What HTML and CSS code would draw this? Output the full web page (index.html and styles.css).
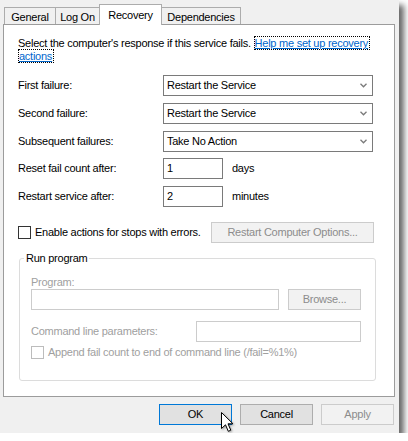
FILE: index.html
```html
<!DOCTYPE html>
<html>
<head>
<meta charset="utf-8">
<link rel="stylesheet" href="styles.css">
</head>
<body>
<div class="dialog">
  <div class="tabs">
    <div class="tab t-general">General</div>
    <div class="tab t-logon">Log On</div>
    <div class="tab active t-recovery">Recovery</div>
    <div class="tab t-deps">Dependencies</div>
  </div>
  <div class="panel">
    <p class="intro">Select the computer's response if this service fails. <a class="link">Help me set up recovery<br>actions</a></p>
    <div class="form">
      <span class="lbl">First failure:</span>
      <div class="combo"><span>Restart the Service</span><svg class="chev" width="7" height="5" viewBox="0 0 7 5"><polyline points="0.5,0.8 3.5,3.8 6.5,0.8" fill="none" stroke="#7a7a7a" stroke-width="1.3"/></svg></div>
      <span class="lbl">Second failure:</span>
      <div class="combo"><span>Restart the Service</span><svg class="chev" width="7" height="5" viewBox="0 0 7 5"><polyline points="0.5,0.8 3.5,3.8 6.5,0.8" fill="none" stroke="#7a7a7a" stroke-width="1.3"/></svg></div>
      <span class="lbl">Subsequent failures:</span>
      <div class="combo"><span>Take No Action</span><svg class="chev" width="7" height="5" viewBox="0 0 7 5"><polyline points="0.5,0.8 3.5,3.8 6.5,0.8" fill="none" stroke="#7a7a7a" stroke-width="1.3"/></svg></div>
      <span class="lbl">Reset fail count after:</span>
      <div class="inrow"><div class="input num">1</div><span class="unit">days</span></div>
      <span class="lbl">Restart service after:</span>
      <div class="inrow"><div class="input num">2</div><span class="unit">minutes</span></div>
    </div>
    <div class="errrow">
      <span class="check"></span>
      <span class="checktext">Enable actions for stops with errors.</span>
      <div class="btn disabled wide">Restart Computer Options...</div>
    </div>
    <fieldset class="group">
      <legend>Run program</legend>
      <div class="dlbl">Program:</div>
      <div class="progrow">
        <div class="input dis prog"></div>
        <div class="btn disabled browse">Browse...</div>
      </div>
      <div class="cmdrow">
        <span class="dlbl cmdlbl">Command line parameters:</span>
        <div class="input dis cmd"></div>
      </div>
      <div class="approw">
        <span class="check dischk"></span>
        <span class="dlbl">Append fail count to end of command line (/fail=%1%)</span>
      </div>
    </fieldset>
  </div>
  <div class="buttons">
    <div class="btn default">OK</div>
    <div class="btn">Cancel</div>
    <div class="btn disabled">Apply</div>
  </div>
  <svg class="cursor" width="14" height="22" viewBox="0 0 14 22"><path d="M0.5,0.5 L0.5,16.5 L4.5,12.8 L7.3,19.3 L9.8,18.2 L7,11.8 L12,11.8 Z" fill="#fff" stroke="#000" stroke-width="1" stroke-linejoin="miter"/></svg>
</div>
</body>
</html>
```
FILE: styles.css
```css
* { box-sizing: border-box; }
body {
  margin: 0;
  background: #fff;
  font-family: "Liberation Sans", Arial, sans-serif;
  font-size: 11px;
  line-height: 13px;
  letter-spacing: -0.25px;
  color: #000;
}
.dialog {
  position: relative;
  width: 399px;
  height: 433px;
  background: #f0f0f0;
  box-shadow: 5px 5px 6px rgba(0, 0, 0, 0.6);
  display: flex;
  flex-direction: column;
  padding: 4px 0 0 3px;
}
.tabs {
  display: flex;
  align-items: flex-end;
  height: 20px;
  padding-left: 1px;
  position: relative;
  z-index: 2;
}
.tab {
  height: 17px;
  border: 1px solid #acacac;
  border-bottom: none;
  background: #f0f0f0;
  margin-left: -1px;
  text-align: center;
  line-height: 16px;
  padding-top: 1px;
}
.t-general { margin-left: 0; width: 52px; }
.t-logon { width: 45px; }
.t-recovery { width: 63px; }
.t-deps { width: 80px; }
.tab.active {
  height: 21px;
  margin-bottom: -1px;
  background: #fff;
  position: relative;
  z-index: 3;
  padding-top: 2px;
}
.panel {
  width: 392px;
  height: 373px;
  flex: none;
  background: #fff;
  border: 1px solid #9c9c9c;
  padding: 12px 0 0 14px;
  position: relative;
  z-index: 1;
}
.intro {
  margin: 0;
  white-space: nowrap;
  line-height: 13px;
}
.link {
  color: #0066cc;
  text-decoration: underline;
  border: 1px dotted #000;
  -webkit-box-decoration-break: clone;
  box-decoration-break: clone;
  padding: 0 1px 0 0;
}
.form {
  margin-top: 12px;
  display: grid;
  grid-template-columns: 145px auto;
  grid-auto-rows: 21px;
  row-gap: 6.75px;
  align-items: center;
}
.combo {
  width: 210px;
  height: 21px;
  border: 1px solid #7a7a7a;
  background: #fff;
  display: flex;
  align-items: center;
  justify-content: space-between;
  padding: 0 5px 0 3px;
}
.chev { display: block; }
.inrow {
  display: flex;
  align-items: center;
  gap: 9px;
}
.input {
  height: 21px;
  border: 1px solid #7a7a7a;
  background: #fff;
}
.num {
  width: 60px;
  padding: 3px 0 0 3px;
}
.errrow {
  margin-top: 15px;
  display: flex;
  align-items: center;
  padding-right: 20px;
}
.check {
  width: 13px;
  height: 13px;
  border: 1px solid #333;
  background: #fff;
  flex: none;
}
.checktext { margin-left: 4px; }
.btn {
  width: 73px;
  height: 21px;
  border: 1px solid #adadad;
  background: #e1e1e1;
  display: flex;
  align-items: center;
  justify-content: center;
  flex: none;
}
.btn.default { border-color: #0078d7; }
.btn.disabled {
  background: #f2f2f2;
  border-color: #cccccc;
  color: #8c8c8c;
}
.btn.wide {
  width: 163px;
  margin-left: auto;
}
.group {
  margin: 9px 0 0 1px;
  width: 357px;
  height: 129px;
  border: 1px solid #dcdcdc;
  border-radius: 3px;
  padding: 0 0 0 11px;
}
.group legend {
  padding: 0 2px;
  margin-left: -7px;
  line-height: 13px;
}
.dlbl { color: #a0a0a0; }
.group > .dlbl { margin-top: 11px; }
.progrow {
  display: flex;
  gap: 9px;
}
.input.dis { border-color: #cccccc; }
.prog { width: 248px; }
.browse { width: 73px; }
.cmdrow {
  margin-top: 11px;
  display: flex;
  align-items: center;
}
.cmdlbl { width: 165px; }
.cmd { width: 165px; }
.approw {
  margin-top: 4px;
  display: flex;
  align-items: center;
  gap: 4px;
}
.dischk { border-color: #bcbcbc; }
.buttons {
  width: 392px;
  margin-top: 7px;
  display: flex;
  justify-content: flex-end;
  gap: 8px;
  padding-right: 1px;
}
.cursor {
  position: absolute;
  left: 221px;
  top: 412px;
  z-index: 5;
  filter: drop-shadow(1px 1px 1px rgba(0, 0, 0, 0.35));
}
```
